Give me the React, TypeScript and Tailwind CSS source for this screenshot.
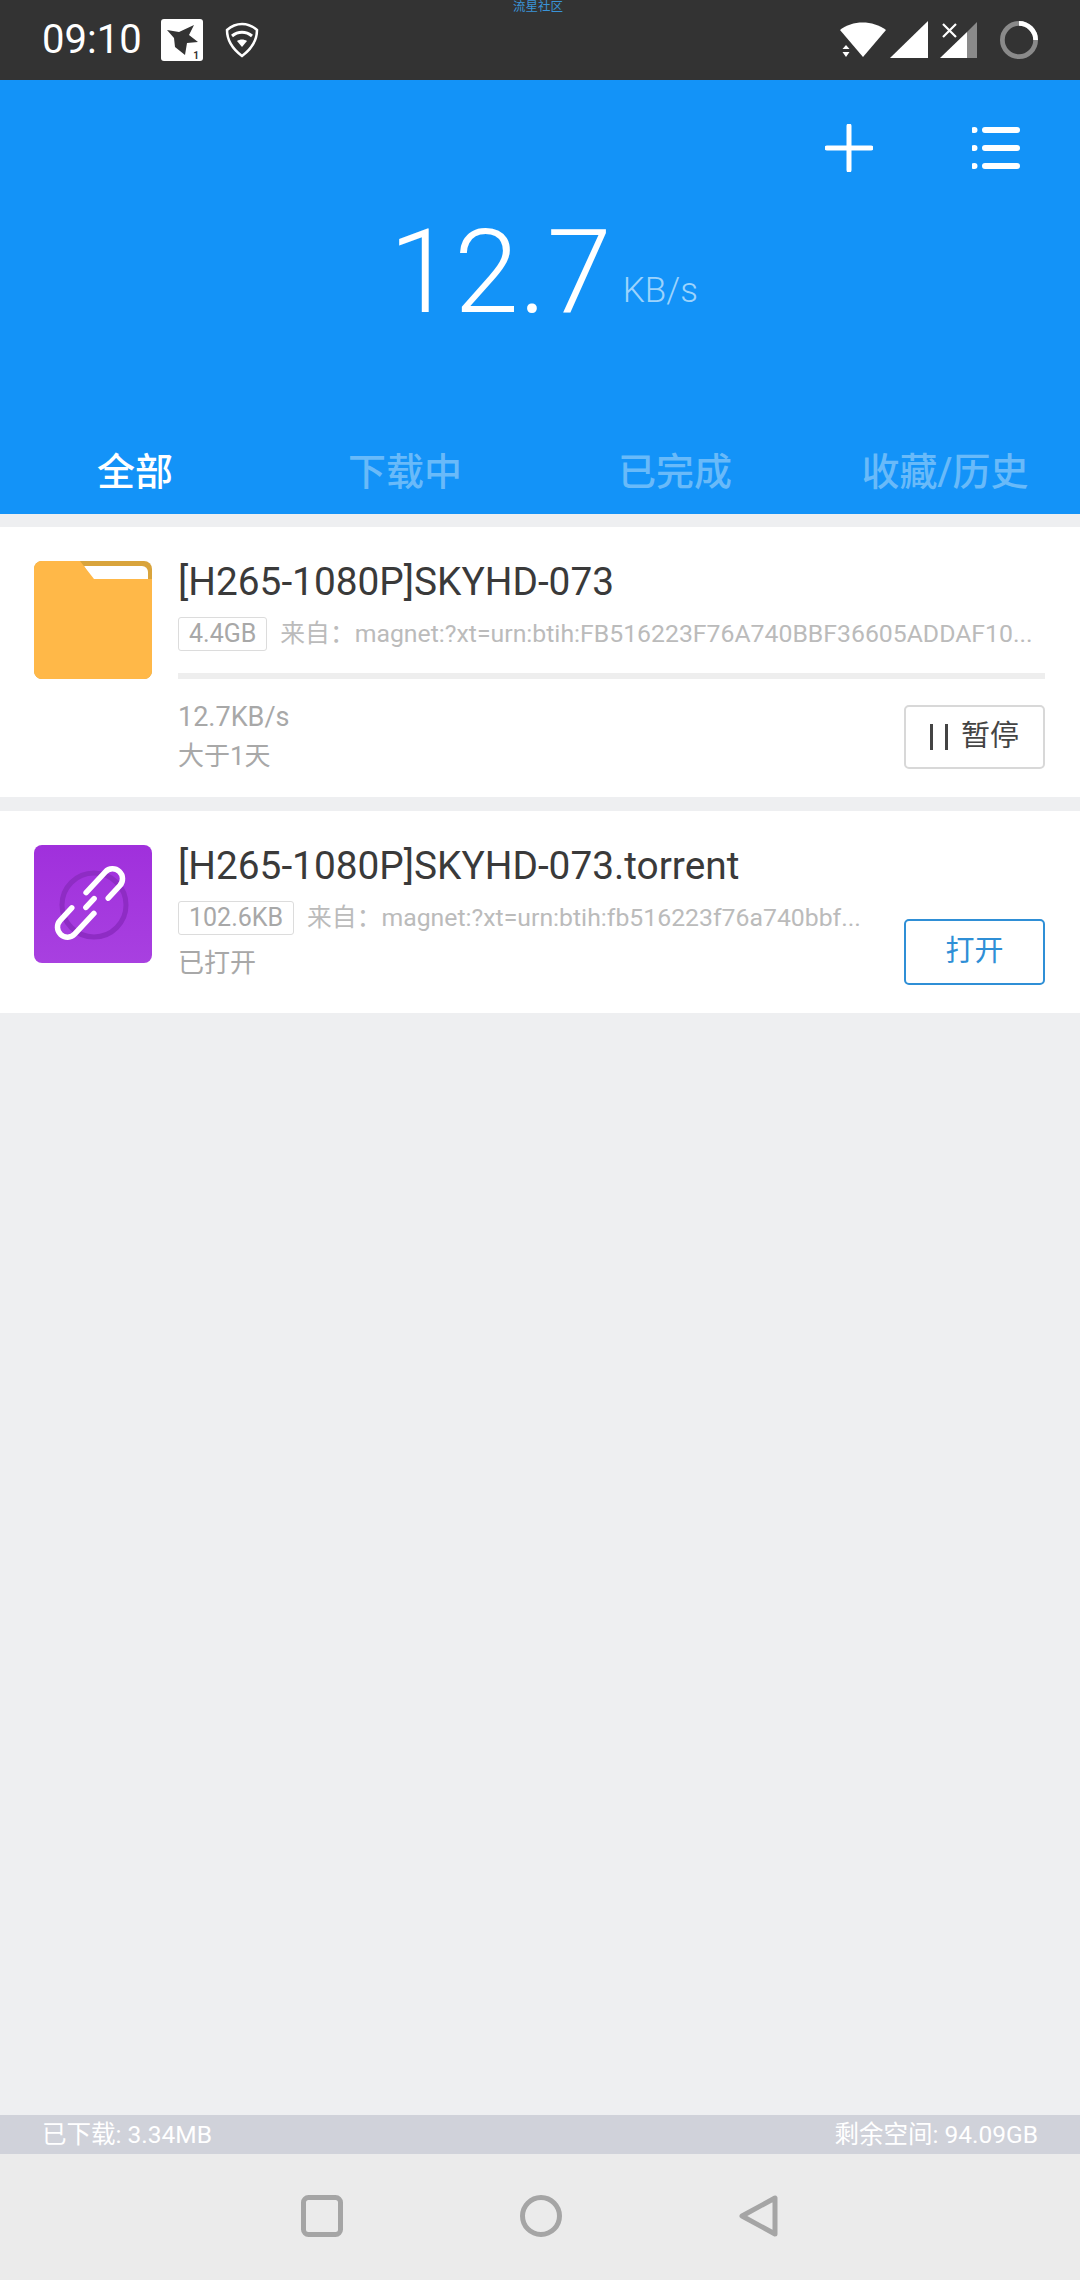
import React from 'react';

const font = { fontFamily: 'Roboto, "Noto Sans CJK SC", sans-serif' };

const tabs = ['全部', '下载中', '已完成', '收藏/历史'];

const BirdBadge = () => (
  <div className="relative w-[42px] h-[42px] bg-white rounded-[3px]">
    <svg viewBox="0 0 42 42" className="w-full h-full">
      <path d="M6 11l12 2L33 6l-5 10 9 7-11 1-2 12-10-8-1-9z" fill="#333" />
      <text x="35" y="40" fontSize="10" fontWeight="700" fill="#333" textAnchor="middle" fontFamily="Roboto">1</text>
    </svg>
  </div>
);

const ShieldIcon = () => (
  <svg viewBox="0 0 34 36" className="w-[34px] h-[36px] ml-[22px]" fill="none" stroke="#fff">
    <path d="M2 8C11 0 23 0 32 8C32 19 25 28 17 34C9 28 2 19 2 8Z" strokeWidth="2.5" />
    <path d="M7 14c6-5 14-5 20 0" strokeWidth="3" />
    <path d="M12 19l5 6 5-6c-3-2-7-2-10 0z" fill="#fff" stroke="none" />
  </svg>
);

const StatusRight = () => (
  <div className="flex items-center mr-[42px]">
    <svg viewBox="0 0 46 38" className="w-[46px] h-[38px]">
      <path d="M0 9C12-1 33-1 46 9L23 36z" fill="#fff" />
      <path d="M6 24l3.5 4h-7zM6 36l3.5-5h-7z" fill="#fff" />
    </svg>
    <svg viewBox="0 0 38 38" className="w-[38px] h-[38px] ml-[4px]">
      <path d="M0 37L38 0v37z" fill="#fff" />
    </svg>
    <svg viewBox="0 0 38 38" className="w-[38px] h-[38px] ml-[12px]">
      <path d="M0 37L27 11v26z" fill="#fff" />
      <path d="M27 11L37 1v36H27z" fill="#8a8a8a" />
      <path d="M3 3l13 13M16 3L3 16" stroke="#fff" strokeWidth="2.2" />
    </svg>
    <svg viewBox="0 0 40 40" className="w-[38px] h-[38px] ml-[22px]" fill="none" strokeWidth="5">
      <circle cx="20" cy="20" r="17.5" stroke="#8a8a8a" />
      <path d="M20 2.5A17.5 17.5 0 0 1 37.5 20" stroke="#fff" />
    </svg>
  </div>
);

const FolderIcon = () => (
  <svg viewBox="0 0 118 118" className="w-[118px] h-[118px] shrink-0">
    <rect width="118" height="118" rx="8" fill="#d9a43c" />
    <path d="M50 5h58a6 6 0 0 1 6 6v8H58z" fill="#fff" />
    <path d="M8 0h38l14 18h58v92a8 8 0 0 1-8 8H8a8 8 0 0 1-8-8V8a8 8 0 0 1 8-8z" fill="#ffb848" />
  </svg>
);

const LinkIcon = () => (
  <svg viewBox="0 0 118 118" className="w-[118px] h-[118px] shrink-0">
    <defs>
      <linearGradient id="purple" x1="0" y1="0" x2="0" y2="1">
        <stop offset="0" stopColor="#a030dc" />
        <stop offset="1" stopColor="#a840e0" />
      </linearGradient>
    </defs>
    <rect width="118" height="118" rx="8" fill="url(#purple)" />
    <circle cx="60" cy="60" r="32" fill="none" stroke="#8e2cc4" strokeWidth="5" />
    <g transform="translate(56 58) rotate(-47)" fill="none" stroke="#fff" strokeWidth="5.5" strokeLinecap="round">
      <path d="M5 -10H33A10 10 0 0 1 33 10H16" />
      <path d="M-5 10H-33A10 10 0 0 1 -33 -10H-16" />
      <path d="M-6 0H6" />
    </g>
  </svg>
);

const Tag = ({ children }: { children: React.ReactNode }) => (
  <span className="shrink-0 h-[34px] px-[10px] flex items-center border border-[#dcdcdc] rounded-[3px] text-[25px] text-[#a8a8a8]">
    {children}
  </span>
);

export default function App() {
  return (
    <div className="w-[1080px] h-[2280px] flex flex-col bg-[#eeeff1] overflow-hidden" style={font}>
      <div className="relative h-[80px] shrink-0 bg-[#333333] flex items-center justify-between">
        <span className="absolute left-[513px] top-0 text-[12.5px] leading-[14px] text-[#3a93d8]">流星社区</span>
        <div className="flex items-center ml-[42px]">
          <span className="text-[40px] text-white mr-[19px]">09:10</span>
          <BirdBadge />
          <ShieldIcon />
        </div>
        <StatusRight />
      </div>

      <div className="h-[434px] shrink-0 bg-[#1393f8] flex flex-col">
        <div className="flex justify-end items-center pt-[44px] pr-[60px] gap-[99px]">
          <svg viewBox="0 0 48 48" className="w-[48px] h-[48px]" stroke="#fff" strokeWidth="5" strokeLinecap="round">
            <path d="M24 2v44M2 24h44" />
          </svg>
          <svg viewBox="0 0 48 46" className="w-[48px] h-[46px]" stroke="#fff" strokeWidth="6" strokeLinecap="round">
            <path d="M13 5h32M13 23h32M13 41h32" />
            <path d="M2 5h.5M2 23h.5M2 41h.5" />
          </svg>
        </div>
        <div className="flex items-end pl-[389px] mt-[40px] text-white">
          <span className="text-[117px] font-light leading-[120px]">12.7</span>
          <span className="text-[35px] leading-[35px] font-light text-[#9dd3fc] ml-[11px] mb-[24px]">KB/s</span>
        </div>
        <div className="mt-auto h-[70px] grid grid-cols-4">
          {tabs.map((t, i) => (
            <span
              key={t}
              className={i === 0 ? 'text-center text-[38px] font-medium text-white' : 'text-center text-[38px] font-medium text-[#69baf9]'}
            >
              {t}
            </span>
          ))}
        </div>
      </div>

      <div className="mt-[13px] h-[270px] bg-white flex pl-[34px] pr-[35px] pt-[34px] gap-[26px]">
        <FolderIcon />
        <div className="flex-1 min-w-0">
          <div className="text-[38.8px] leading-[42px] text-[#3a3a3a]">[H265-1080P]SKYHD-073</div>
          <div className="flex items-center mt-[12px] gap-[13px]">
            <Tag>4.4GB</Tag>
            <span className="whitespace-nowrap text-[24.8px] text-[#bbbbbb]">来自：magnet:?xt=urn:btih:FB516223F76A740BBF36605ADDAF10...</span>
          </div>
          <div className="h-[6px] bg-[#eeeeee] mt-[21px]" />
          <div className="flex justify-between items-start mt-[26px]">
            <div className="leading-[39px] text-[#a8a8a8] -mt-[7px]">
              <div className="text-[27px]">12.7KB/s</div>
              <div className="text-[26px]">大于1天</div>
            </div>
            <button className="w-[141px] h-[64px] flex items-center justify-center gap-[13px] border-2 border-[#d8d8d8] rounded-[5px] text-[29px] text-[#444444]">
              <span className="w-[18px] h-[26px] border-x-[3px] border-[#444444]" />
              暂停
            </button>
          </div>
        </div>
      </div>

      <div className="mt-[14px] h-[202px] bg-white flex pl-[34px] pr-[35px] pt-[34px] gap-[26px]">
        <LinkIcon />
        <div className="flex-1 min-w-0 flex justify-between">
          <div className="min-w-0">
            <div className="text-[38.8px] leading-[42px] text-[#3a3a3a] whitespace-nowrap">[H265-1080P]SKYHD-073.torrent</div>
            <div className="flex items-center mt-[12px] gap-[13px]">
              <Tag>102.6KB</Tag>
              <span className="whitespace-nowrap text-[24.8px] text-[#bbbbbb]">来自：magnet:?xt=urn:btih:fb516223f76a740bbf...</span>
            </div>
            <div className="text-[26px] leading-[39px] text-[#a8a8a8] mt-[8px]">已打开</div>
          </div>
          <button className="shrink-0 w-[141px] h-[66px] mt-[74px] border-2 border-[#2f8fd6] rounded-[5px] text-[29px] text-[#2f8fd6]">打开</button>
        </div>
      </div>

      <div className="flex-1" />

      <div className="h-[39px] shrink-0 bg-[#d0d2da] flex items-center justify-between pl-[42px] pr-[42px] pt-[1px] text-[24.5px] text-white">
        <span>已下载: 3.34MB</span>
        <span>剩余空间: 94.09GB</span>
      </div>

      <div className="h-[126px] shrink-0 bg-[#ebebeb] flex items-center justify-center gap-[177px] pb-[2px]">
        <svg viewBox="0 0 42 42" className="w-[42px] h-[42px]" fill="none" stroke="#a5a5a5" strokeWidth="5">
          <rect x="2.5" y="2.5" width="37" height="37" rx="5" />
        </svg>
        <svg viewBox="0 0 42 42" className="w-[42px] h-[42px]" fill="none" stroke="#a5a5a5" strokeWidth="5">
          <circle cx="21" cy="21" r="18.5" />
        </svg>
        <svg viewBox="0 0 40 42" className="w-[40px] h-[42px]" fill="none" stroke="#a5a5a5" strokeWidth="5" strokeLinejoin="round">
          <path d="M36 3v36L3 21z" />
        </svg>
      </div>
    </div>
  );
}
